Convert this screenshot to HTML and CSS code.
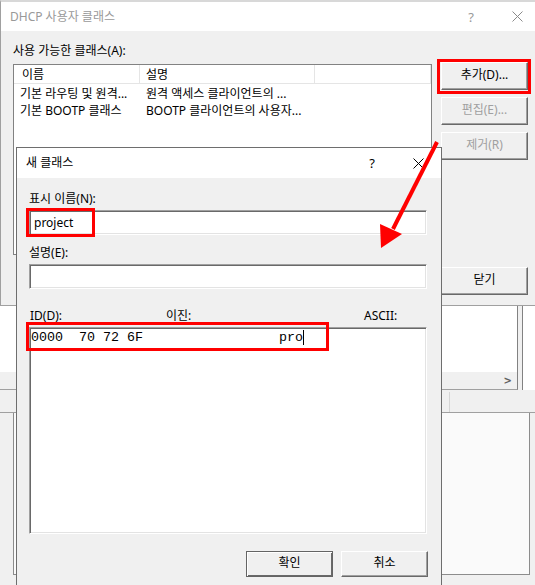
FILE: index.html
```html
<!DOCTYPE html>
<html lang="ko">
<head>
    <meta charset="UTF-8">
    <title>DHCP 사용자 클래스</title>
    <link rel="stylesheet" href="styles.css">
</head>
<body>
    <div class="desk">
        <!-- 뒤쪽 MMC 콘솔 -->
        <div class="console">
            <div class="console-top"></div>
            <div class="result-pane">
                <div class="result-list">
                    <div class="list-blank"></div>
                    <div class="hscroll"><span class="scroll-arrow">&gt;</span></div>
                </div>
                <div class="splitter"></div>
                <div class="side-list"></div>
            </div>
            <div class="toolbar"><span class="tool-sep"></span></div>
            <div class="detail-pane"></div>
        </div>

        <!-- DHCP 사용자 클래스 창 -->
        <div class="window classes-window">
            <div class="titlebar inactive">
                <span class="title">DHCP 사용자 클래스</span>
                <span class="caption-btn">?</span>
                <span class="caption-btn">
                    <svg width="11" height="11" viewBox="0 0 11 11"><path d="M0.5 0.5L10.5 10.5M10.5 0.5L0.5 10.5" stroke="#8a8a8a" stroke-width="1"/></svg>
                </span>
            </div>
            <div class="window-body">
                <div class="main-col">
                    <div class="field-label">사용 가능한 클래스(A):</div>
                    <div class="listview">
                        <div class="lv-row lv-header">
                            <div class="lv-cell c-name">이름</div>
                            <div class="lv-cell c-desc">설명</div>
                            <div class="lv-cell c-rest"></div>
                        </div>
                        <div class="lv-row">
                            <div class="lv-cell c-name">기본 라우팅 및 원격...</div>
                            <div class="lv-cell c-desc">원격 액세스 클라이언트의 ...</div>
                        </div>
                        <div class="lv-row">
                            <div class="lv-cell c-name">기본 BOOTP 클래스</div>
                            <div class="lv-cell c-desc">BOOTP 클라이언트의 사용자...</div>
                        </div>
                    </div>
                </div>
                <div class="btn-col">
                    <div class="btn">추가(D)...</div>
                    <div class="btn disabled">편집(E)...</div>
                    <div class="btn disabled">제거(R)</div>
                    <div class="btn close-btn">닫기</div>
                </div>
            </div>
        </div>

        <!-- 새 클래스 대화 상자 -->
        <div class="window new-class-dialog">
            <div class="titlebar">
                <span class="title">새 클래스</span>
                <span class="caption-btn">?</span>
                <span class="caption-btn">
                    <svg width="11" height="11" viewBox="0 0 11 11"><path d="M0.5 0.5L10.5 10.5M10.5 0.5L0.5 10.5" stroke="#000" stroke-width="1"/></svg>
                </span>
            </div>
            <div class="dialog-body">
                <div class="field-label">표시 이름(N):</div>
                <div class="textbox">project</div>
                <div class="field-label gap-top">설명(E):</div>
                <div class="textbox"></div>
                <div class="hex-labels">
                    <span class="hl-id">ID(D):</span>
                    <span class="hl-bin">이진:</span>
                    <span>ASCII:</span>
                </div>
                <div class="hex-box"><span class="hex-line">0000  70 72 6F                 pro</span><span class="caret"></span></div>
                <div class="dialog-buttons">
                    <div class="btn default">확인</div>
                    <div class="btn">취소</div>
                </div>
            </div>
        </div>

        <!-- 강조 표시 -->
        <div class="mark mark-add"></div>
        <div class="mark mark-name"></div>
        <div class="mark mark-hex"></div>
        <svg class="annotation" width="535" height="585" viewBox="0 0 535 585">
            <line x1="437" y1="142" x2="393" y2="229" stroke="#f00" stroke-width="4"/>
            <polygon points="381,248 380,224 402,234" fill="#f00"/>
        </svg>
    </div>
</body>
</html>
```

FILE: styles.css
```css
body {
    margin: 0;
    font-family: "Noto Sans", "Noto Sans CJK KR", sans-serif;
    font-size: 12px;
    color: #000;
    background-color: #f0f0f0;
}
.desk {
    position: relative;
    width: 535px;
    height: 585px;
    overflow: hidden;
}

/* 콘솔 */
.console {
    display: flex;
    flex-direction: column;
    height: 585px;
}
.console-top {
    height: 305px;
    flex: none;
}
.result-pane {
    display: flex;
    height: 85px;
    flex: none;
}
.result-list {
    flex: 1;
    display: flex;
    flex-direction: column;
    background: #fff;
    border-right: 1px solid #828282;
    border-bottom: 1px solid #a0a0a0;
}
.list-blank {
    flex: 1;
}
.hscroll {
    height: 17px;
    background: #f0f0f0;
    display: flex;
    justify-content: flex-end;
    align-items: center;
    padding-right: 5px;
    color: #606060;
    font-family: "DejaVu Sans", sans-serif;
    font-size: 10px;
    font-weight: bold;
}
.splitter {
    width: 4px;
    border-right: 1px solid #828282;
}
.side-list {
    width: 12px;
    background: #fff;
}
.toolbar {
    height: 22px;
    flex: none;
    border-bottom: 1px solid #a0a0a0;
}
.tool-sep {
    display: block;
    margin-left: 449px;
    margin-top: 2px;
    height: 20px;
    border-left: 1px solid #d5d5d5;
}
.detail-pane {
    height: 161px;
    flex: none;
    margin: 0 5px 0 13px;
    background: #fafafa;
    border: 1px solid #8c8c8c;
    border-top: 0;
}

/* 창 공통 */
.window {
    position: absolute;
    box-sizing: border-box;
    background: #f0f0f0;
}
.titlebar {
    display: flex;
    align-items: center;
    background: #fff;
}
.titlebar .title {
    flex: 1;
    line-height: 16px;
}
.caption-btn {
    width: 46px;
    text-align: center;
    font-size: 13px;
    line-height: 16px;
    display: flex;
    justify-content: center;
}
.inactive {
    color: #999;
}

.classes-window {
    left: 0;
    top: 0;
    width: 540px;
    height: 306px;
    border-top: 2px solid #d8d8d8;
    border-left: 1px solid #a0a0a0;
    border-bottom: 1px solid #a0a0a0;
}
.classes-window .titlebar {
    height: 29px;
    padding-left: 9px;
}
.window-body {
    display: flex;
    height: 274px;
}
.main-col {
    padding: 12px 0 0 12px;
}
.field-label {
    line-height: 16px;
    height: 16px;
}
.listview {
    margin-top: 5px;
    width: 419px;
    height: 191px;
    box-sizing: border-box;
    background: #fff;
    border: 1px solid #828282;
}
.lv-row {
    display: flex;
    height: 17px;
    line-height: 17px;
    white-space: nowrap;
}
.lv-header {
    height: 19px;
    line-height: 19px;
    margin-bottom: 1px;
}
.lv-cell {
    box-sizing: border-box;
    padding-left: 6px;
    overflow: hidden;
}
.c-name {
    width: 126px;
}
.c-desc {
    width: 175px;
}
.c-rest {
    flex: 1;
}
.lv-header .lv-cell {
    border-right: 1px solid #e5e5e5;
    border-bottom: 1px solid #e5e5e5;
}
.lv-header .c-name {
    padding-left: 8px;
}

.btn-col {
    display: flex;
    flex-direction: column;
    margin-left: 9px;
    width: 87px;
    padding: 31px 0 10px;
}
.btn {
    box-sizing: border-box;
    width: 87px;
    height: 28px;
    line-height: 24px;
    text-align: center;
    background: #f0f0f0;
    border: 1px solid;
    border-color: #fff #696969 #696969 #fff;
    box-shadow: inset -1px -1px #a0a0a0;
}
.btn-col .btn + .btn {
    margin-top: 7px;
}
.btn.disabled {
    color: #a0a0a0;
}
.btn-col .btn.close-btn {
    margin-top: auto;
}

/* 새 클래스 */
.new-class-dialog {
    left: 16px;
    top: 147px;
    width: 426px;
    height: 450px;
    border: 1px solid #6e6e6e;
}
.new-class-dialog .titlebar {
    height: 30px;
    padding-left: 9px;
}
.dialog-body {
    padding: 12px 14px 0 12px;
}
.dialog-body .field-label:first-child {
    margin-top: 1px;
}
.textbox {
    box-sizing: border-box;
    margin-top: 3px;
    height: 25px;
    padding: 2px 4px;
    line-height: 19px;
    background: #fff;
    border: 1px solid;
    border-color: #a0a0a0 #fff #fff #a0a0a0;
    box-shadow: inset 1px 1px #696969, inset -1px -1px #e3e3e3;
}
.gap-top {
    margin-top: 10px;
}
.hex-labels {
    display: flex;
    margin-top: 19px;
    line-height: 16px;
    padding-left: 1px;
}
.hl-id {
    width: 136px;
}
.hl-bin {
    width: 198px;
}
.hex-box {
    box-sizing: border-box;
    margin-top: 3px;
    height: 207px;
    padding: 2px 1px;
    background: #fff;
    border: 1px solid;
    border-color: #a0a0a0 #fff #fff #a0a0a0;
    box-shadow: inset 1px 1px #696969, inset -1px -1px #e3e3e3;
    font-family: "Liberation Mono", monospace;
    font-size: 13.33px;
    line-height: 15px;
    white-space: pre;
}
.caret {
    display: inline-block;
    width: 1px;
    height: 15px;
    background: #000;
    vertical-align: top;
}
.dialog-buttons {
    display: flex;
    justify-content: flex-end;
    gap: 8px;
    margin-top: 17px;
    margin-right: -1px;
}
.dialog-buttons .btn {
    height: 26px;
    line-height: 22px;
}
.btn.default {
    border-color: #646464;
    box-shadow: inset 1px 1px #fff, inset -1px -1px #696969;
}

/* 빨간 표시 */
.mark {
    position: absolute;
    box-sizing: border-box;
    border: 3px solid #f00;
}
.mark-add {
    left: 437px;
    top: 59px;
    width: 94px;
    height: 35px;
}
.mark-name {
    left: 26px;
    top: 208px;
    width: 69px;
    height: 29px;
}
.mark-hex {
    left: 26px;
    top: 322px;
    width: 303px;
    height: 29px;
}
.annotation {
    position: absolute;
    left: 0;
    top: 0;
    pointer-events: none;
}
```
